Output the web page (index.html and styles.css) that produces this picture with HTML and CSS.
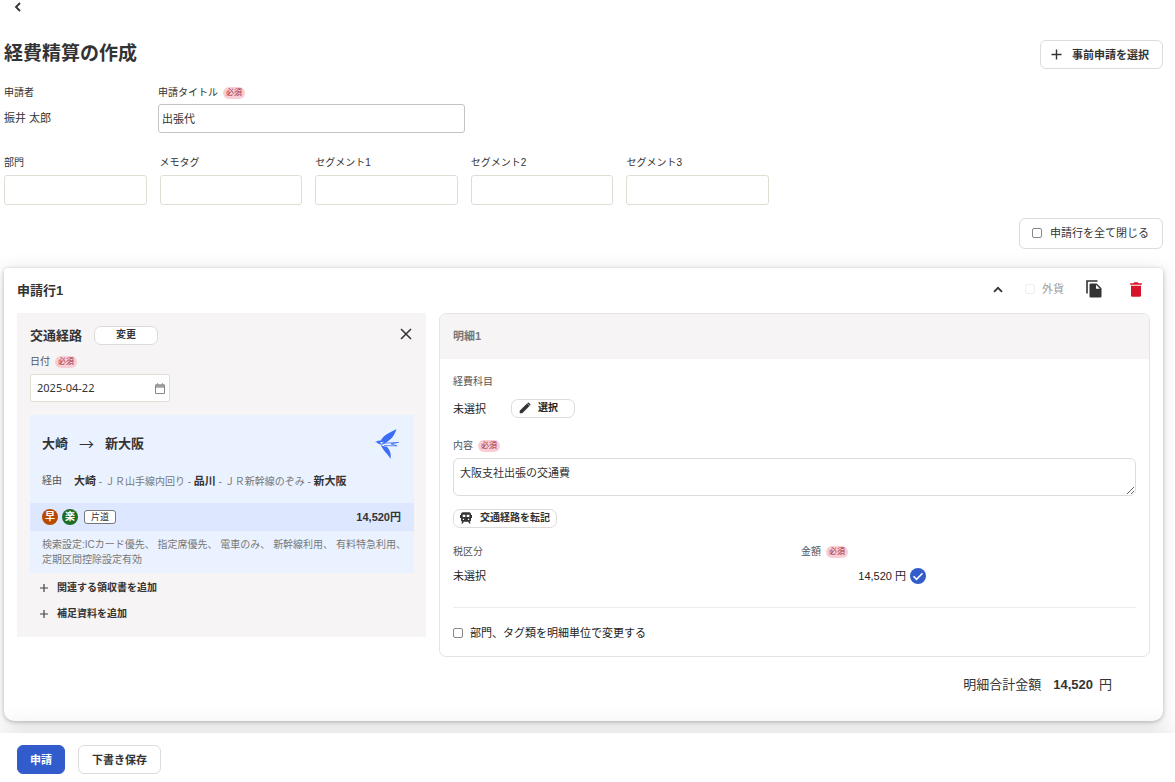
FILE: index.html
```html
<!DOCTYPE html>
<html lang="ja">
<head>
<meta charset="utf-8">
<meta name="viewport" content="width=device-width, initial-scale=1">
<title>経費精算の作成</title>
<link rel="stylesheet" href="styles.css">
</head>
<body>
<main class="page">
  <nav class="topbar">
    <button class="icon-btn" type="button" aria-label="戻る">
      <svg width="8" height="10" viewBox="0 0 8 10"><path d="M6 1 2 5l4 4" fill="none" stroke="#333" stroke-width="1.8"/></svg>
    </button>
  </nav>

  <header class="page-head">
    <h1>経費精算の作成</h1>
    <button class="btn btn-lg" type="button">
      <svg width="11" height="11" viewBox="0 0 11 11"><path d="M5.5 0.5v10M.5 5.5h10" stroke="#333" stroke-width="1.4"/></svg>
      事前申請を選択
    </button>
  </header>

  <section class="applicant">
    <div class="field">
      <div class="label">申請者</div>
      <div class="applicant-name">振井 太郎</div>
    </div>
    <div class="field">
      <label class="label" for="title">申請タイトル <span class="badge">必須</span></label>
      <input class="text-input title-input" id="title" type="text" value="出張代">
    </div>
  </section>

  <section class="segments">
    <div class="field"><label class="label" for="dept">部門</label><input class="text-input" id="dept" type="text"></div>
    <div class="field"><label class="label" for="memo">メモタグ</label><input class="text-input" id="memo" type="text"></div>
    <div class="field"><label class="label" for="seg1">セグメント1</label><input class="text-input" id="seg1" type="text"></div>
    <div class="field"><label class="label" for="seg2">セグメント2</label><input class="text-input" id="seg2" type="text"></div>
    <div class="field"><label class="label" for="seg3">セグメント3</label><input class="text-input" id="seg3" type="text"></div>
  </section>

  <div class="toolbar">
    <label class="close-all"><input class="check" type="checkbox">申請行を全て閉じる</label>
  </div>

  <section class="card">
    <header class="card-head">
      <h2>申請行1</h2>
      <div class="card-tools">
        <button class="icon-btn" type="button" aria-label="折りたたむ">
          <svg width="10" height="7" viewBox="0 0 10 7"><path d="M1 5.8 5 1.8l4 4" fill="none" stroke="#333" stroke-width="1.8"/></svg>
        </button>
        <label class="foreign"><input class="check" type="checkbox" disabled>外貨</label>
        <button class="icon-btn" type="button" aria-label="複製">
          <svg width="16" height="18" viewBox="0 0 16 18"><path d="M1 13.5V1h10.5" fill="none" stroke="#333" stroke-width="1.6"/><path d="M4.700 3.500h6L15.500 8.200v8a1.200 1.200 0 0 1-1.200 1.200H4.700a1.200 1.200 0 0 1-1.200-1.200V4.700a1.200 1.200 0 0 1 1.200-1.200z" fill="#333"/><path d="M10 4.800v3.900h4z" fill="#fff"/></svg>
        </button>
        <button class="icon-btn trash" type="button" aria-label="削除">
          <svg width="12" height="15" viewBox="0 0 12 15"><path d="M.2 1.300h3.300L4.500.3h3l1 1h3.300v1.500H.2zM1 3.800h10v9.400a1.500 1.500 0 0 1-1.500 1.500h-7A1.500 1.500 0 0 1 1 13.200z" fill="#d8142b"/></svg>
        </button>
      </div>
    </header>

    <div class="columns">
      <section class="route-panel">
        <div class="route-head">
          <h3>交通経路</h3>
          <button class="btn btn-sm change" type="button">変更</button>
          <button class="icon-btn close" type="button" aria-label="閉じる">
            <svg width="12" height="12" viewBox="0 0 12 12"><path d="m1 1 10 10M11 1 1 11" stroke="#333" stroke-width="1.5"/></svg>
          </button>
        </div>
        <label class="label date-label" for="date">日付 <span class="badge">必須</span></label>
        <div class="date-box">
          <input id="date" type="text" value="2025-04-22">
          <svg width="10" height="11" viewBox="0 0 10 11"><path d="M.5 2h9v8.500h-9z" fill="#fff" stroke="#888"/><path d="M.5 2h9v2.200h-9z" fill="#aaa" stroke="#888" stroke-width=".8"/><path d="M2.500.3v1.500M7.500.3v1.500" stroke="#888" stroke-width="1.200"/></svg>
        </div>

        <div class="route-card">
          <div class="route-main">
            <div class="route-ends">
              <b>大崎</b><span class="arrow">→</span><b>新大阪</b>
              <svg class="bird" width="24" height="30" viewBox="0 0 24 30"><path d="M0 13.300 1.800 12.300C3 11.500 4.300 11.700 5.700 11.500 8.500 6.500 14 3.500 21.500.3 19.500 6 17 10 11.500 13.200L7 15.800C5 15.500 3 15 2 13.600z" fill="#3b6ef5"/><path d="M5.500 15.500C7 17.200 9.500 17.600 11.700 17.500 14.600 20.500 16.500 24.500 15.500 29.900 13.500 25.500 8 22 5.500 15.500z" fill="#3b6ef5"/><path d="M9 14.200 23.500 13.400 16 14.900 22 16.800 9 16.600" fill="none" stroke="#3b6ef5" stroke-width=".8"/><path d="m4.800 13.400 4-.6-2.300 2.100z" fill="#ebf2ff"/></svg>
            </div>
            <div class="route-via"><span class="via-label">経由</span><span><b>大崎</b> - ＪＲ山手線内回り - <b>品川</b> - ＪＲ新幹線のぞみ - <b>新大阪</b></span></div>
          </div>
          <div class="fare-row">
            <span class="mark fast">早</span><span class="mark easy">楽</span><span class="oneway">片道</span>
            <b class="fare">14,520円</b>
          </div>
          <p class="search-note"><span>検索設定:ICカード優先、</span> <span>指定席優先、</span> <span>電車のみ、</span> <span>新幹線利用、</span> <span>有料特急利用、</span> <span>定期区間控除設定有効</span></p>
        </div>

        <button class="add-link" type="button"><svg width="8" height="8" viewBox="0 0 8 8"><path d="M4 0v8M0 4h8" stroke="#444" stroke-width="1.200"/></svg>関連する領収書を追加</button>
        <button class="add-link" type="button"><svg width="8" height="8" viewBox="0 0 8 8"><path d="M4 0v8M0 4h8" stroke="#444" stroke-width="1.200"/></svg>補足資料を追加</button>
      </section>

      <section class="detail-panel">
        <h3 class="detail-head">明細1</h3>
        <div class="detail-body">
          <div class="label">経費科目</div>
          <div class="subject-row">
            <span>未選択</span>
            <button class="btn btn-sm select-btn" type="button">
              <svg width="12" height="12" viewBox="0 0 12 12"><path d="M.7 11.300v-2.500L8 1.500 10.500 4l-7.300 7.300zM8.700.8a.9.9 0 0 1 1.200 0l1.300 1.300a.9.9 0 0 1 0 1.200l-.4.400L8.300 1.200z" fill="#333"/></svg>
              選択
            </button>
          </div>

          <label class="label content-label" for="content">内容 <span class="badge">必須</span></label>
          <textarea class="content-input" id="content">大阪支社出張の交通費</textarea>
          <button class="btn btn-sm copy-route" type="button">
            <svg width="12" height="12" viewBox="0 0 12 12"><path fill-rule="evenodd" d="M3 .2h6A2 2 0 0 1 11 2v6.200a1.500 1.500 0 0 1-1.300 1.500l1 1.800H9.100l-.8-1.700H3.700l-.8 1.700H1.300l1-1.800A1.500 1.500 0 0 1 1 8.200V2A2 2 0 0 1 3 .2zM2.700 2.700v2.300h2.700V2.700zm4 0v2.300h2.700V2.700zM2.800 6.800v1.300h1.300V6.800zm5.100 0v1.300h1.300V6.800zM0 3h1v3H0zM11 3h1v3h-1z" fill="#333"/></svg>
            交通経路を転記
          </button>

          <div class="tax-grid">
            <div>
              <div class="label">税区分</div>
              <div class="value-row">未選択</div>
            </div>
            <div>
              <div class="label">金額 <span class="badge">必須</span></div>
              <div class="value-row amount">
                <span>14,520 円</span>
                <svg width="16" height="16" viewBox="0 0 16 16"><circle cx="8" cy="8" r="8" fill="#325ccc"/><path d="m3.500 8.300 3 3 6-6" fill="none" stroke="#fff" stroke-width="1.600"/></svg>
              </div>
            </div>
          </div>

          <hr class="rule">
          <label class="per-line"><input class="check" type="checkbox">部門、タグ類を明細単位で変更する</label>
        </div>
      </section>
    </div>

    <div class="total">明細合計金額<b>14,520</b><span>円</span></div>
  </section>
</main>

<footer class="actions">
  <button class="btn btn-lg primary" type="button">申請</button>
  <button class="btn btn-lg" type="button">下書き保存</button>
</footer>
</body>
</html>
```
FILE: styles.css
```css
* {
  box-sizing: border-box;
}

body {
  margin: 0;
  min-height: 100vh;
  display: flex;
  flex-direction: column;
  justify-content: space-between;
  background: #fff;
  color: #333;
  font: 11px/16px "Liberation Sans", "Noto Sans CJK JP", sans-serif;
}

h1, h2, h3, p {
  margin: 0;
}

button, input, textarea {
  font: inherit;
  color: inherit;
}

svg {
  flex: none;
  display: block;
}

.page {
  padding: 0 12px 12px 4px;
}

.icon-btn {
  display: flex;
  padding: 0;
  border: 0;
  background: none;
}

.topbar {
  height: 14px;
  padding: 2px 10px;
}

.page-head {
  display: flex;
  align-items: center;
  justify-content: space-between;
  margin: 26px 0 16px;
}

.page-head h1 {
  padding-bottom: 2px;
  font-size: 19px;
  line-height: 26px;
}

.btn {
  display: flex;
  align-items: center;
  justify-content: center;
  border: 1px solid #dcdcdc;
  background: #fff;
  font-weight: bold;
}

.btn-lg {
  gap: 9px;
  height: 29px;
  padding: 0 13px;
  border-radius: 6px;
}

.page-head .btn {
  gap: 10px;
  padding: 0 13px 0 10px;
}

.btn-sm {
  height: 19px;
  padding: 0 6px 2px;
  border-radius: 7px;
  font-size: 10px;
  line-height: 14px;
}

.label {
  display: flex;
  align-items: center;
  gap: 5px;
  color: #555;
  font-size: 10px;
  line-height: 16px;
}

.applicant .label,
.segments .label {
  color: #333;
}

.badge {
  padding: 0 3px;
  border-radius: 6px;
  background: #f8cdd3;
  color: #a12d45;
  font-size: 8px;
  line-height: 12px;
}

.applicant {
  display: grid;
  grid-template-columns: 141px minmax(0, 307px);
  gap: 13px;
}

.applicant-name {
  margin-top: 3px;
  line-height: 28px;
}

.text-input {
  display: block;
  width: 100%;
  height: 30px;
  margin-top: 4px;
  padding: 0 3px 2px;
  border: 1px solid #e0ded4;
  border-radius: 3px;
  background: #fff;
}

.text-input.title-input {
  height: 29px;
  margin-top: 3px;
  border-color: #c4c4c4;
}

.segments {
  display: grid;
  grid-template-columns: repeat(5, minmax(0, 1fr));
  gap: 13px;
  max-width: 765px;
  margin-top: 22px;
}

.check {
  appearance: none;
  flex: none;
  width: 10px;
  height: 10px;
  margin: 0;
  border: 1px solid #888;
  border-radius: 2px;
  background: #fff;
}

.check:checked {
  background: #325ccc;
}

.toolbar {
  display: flex;
  justify-content: flex-end;
  margin: 13px 0 19px;
}

.close-all {
  display: flex;
  align-items: center;
  gap: 8px;
  height: 31px;
  padding: 0 13px 2px 12px;
  border: 1px solid #dcdcdc;
  border-radius: 6px;
}

.card {
  padding: 0 13px 28px;
  border-radius: 4px 4px 10px 10px;
  background: #fff;
  box-shadow: 0 1px 4px rgba(0, 0, 0, .25), 0 2px 20px rgba(0, 0, 0, .1);
}

.card-head {
  display: flex;
  align-items: center;
  justify-content: space-between;
  height: 45px;
}

.card-head h2,
.route-head h3 {
  font-size: 13px;
  line-height: 19px;
}

.card-tools {
  display: flex;
  align-items: center;
  gap: 22px;
  padding: 0 8px 3px 0;
}

.trash {
  margin-left: 6px;
}

.foreign {
  display: flex;
  align-items: center;
  gap: 7px;
  color: #999;
}

.foreign .check {
  border-color: #eee;
}

.columns {
  display: grid;
  grid-template-columns: minmax(0, 409fr) minmax(0, 711fr);
  gap: 13px;
  align-items: start;
}

.route-panel {
  padding: 13px 12px 10px 13px;
  background: #f6f4f5;
}

.route-head {
  display: flex;
  align-items: center;
  height: 19px;
}

.change {
  width: 64px;
  margin-left: 12px;
}

.close {
  margin: 0 2px 0 auto;
  padding-bottom: 3px;
}

.date-label {
  margin-top: 9px;
}

.date-box {
  display: flex;
  align-items: center;
  width: 140px;
  height: 28px;
  margin: 4px 0 13px;
  padding: 0 4px 0 6px;
  border: 1px solid #e0ded4;
  border-radius: 3px;
  background: #fff;
}

.date-box input {
  flex: 1;
  min-width: 0;
  padding: 0;
  border: 0;
  outline: 0;
  font-family: "Noto Sans", sans-serif;
}

.route-card {
  margin-bottom: 2px;
  background: #ebf2ff;
}

.route-main {
  padding: 14px 15px 13px 12px;
}

.route-ends {
  display: flex;
  align-items: center;
  gap: 11px;
  font-size: 13px;
  line-height: 30px;
}

.arrow {
  font-family: "Noto Sans CJK JP", sans-serif;
  font-size: 15px;
}

.bird {
  margin-left: auto;
}

.route-via {
  display: flex;
  gap: 12px;
  margin-top: 14px;
  color: #777;
  font-size: 10px;
}

.route-via b {
  color: #333;
  font-size: 11px;
}

.via-label {
  color: #555;
}

.fare-row {
  display: flex;
  align-items: center;
  gap: 4px;
  height: 28px;
  padding: 0 13px 0 12px;
  background: #dde7ff;
}

.mark {
  width: 16px;
  border-radius: 50%;
  color: #fff;
  font-size: 10px;
  font-weight: bold;
  text-align: center;
}

.fast {
  background: #b84a00;
}

.easy {
  background: #1b6e28;
}

.oneway {
  margin-left: 2px;
  padding: 0 6px;
  border: 1px solid #777;
  border-radius: 3px;
  background: #fff;
  font-size: 9px;
  line-height: 12px;
}

.fare {
  margin-left: auto;
}

.search-note {
  padding: 6px 0 6px 12px;
  color: #777;
  font-size: 10px;
  line-height: 15px;
}

.search-note span {
  display: inline-block;
}

.add-link {
  display: flex;
  align-items: center;
  gap: 9px;
  height: 26px;
  padding: 0 10px;
  border: 0;
  background: none;
  font-size: 10px;
  font-weight: bold;
}

.detail-panel {
  overflow: hidden;
  border: 1px solid #e4e4e4;
  border-radius: 7px;
}

.detail-head {
  padding: 0 13px;
  background: #f6f4f5;
  color: #777;
  font-size: 11px;
  line-height: 45px;
}

.detail-body {
  padding: 15px 13px;
}

.subject-row {
  display: flex;
  align-items: center;
  gap: 25px;
  margin-top: 9px;
  color: #222;
}

.select-btn {
  gap: 7px;
  width: 64px;
  padding-right: 15px;
}

.content-label {
  margin-top: 20px;
}

.content-input {
  display: block;
  width: 100%;
  height: 38px;
  margin: 4px 0 13px;
  padding: 6px;
  border: 1px solid #dcdcdc;
  border-radius: 6px;
  overflow: auto;
  resize: vertical;
}

.copy-route {
  gap: 8px;
}

.tax-grid {
  display: grid;
  grid-template-columns: repeat(2, minmax(0, 1fr));
  gap: 13px;
  margin-top: 16px;
}

.value-row {
  margin-top: 6px;
  color: #222;
  line-height: 20px;
}

.amount {
  display: flex;
  align-items: center;
  justify-content: flex-end;
  gap: 4px;
  width: 125px;
}

.rule {
  height: 1px;
  margin: 21px 0 17px;
  border: 0;
  background: #ececec;
}

.per-line {
  display: flex;
  align-items: center;
  gap: 7px;
  color: #222;
}

.total {
  display: flex;
  justify-content: flex-end;
  margin-top: 20px;
  padding-right: 38px;
  font-size: 13px;
}

.total b {
  margin: 0 6px 0 12px;
}

.actions {
  position: sticky;
  bottom: 0;
  display: flex;
  gap: 13px;
  padding: 12px 17px 8px;
  background: #fff;
  box-shadow: 0 -2px 30px rgba(0, 0, 0, .12);
}

.primary {
  padding: 0 12px;
  border-color: #325ccc;
  background: #325ccc;
  color: #fff;
}
```
